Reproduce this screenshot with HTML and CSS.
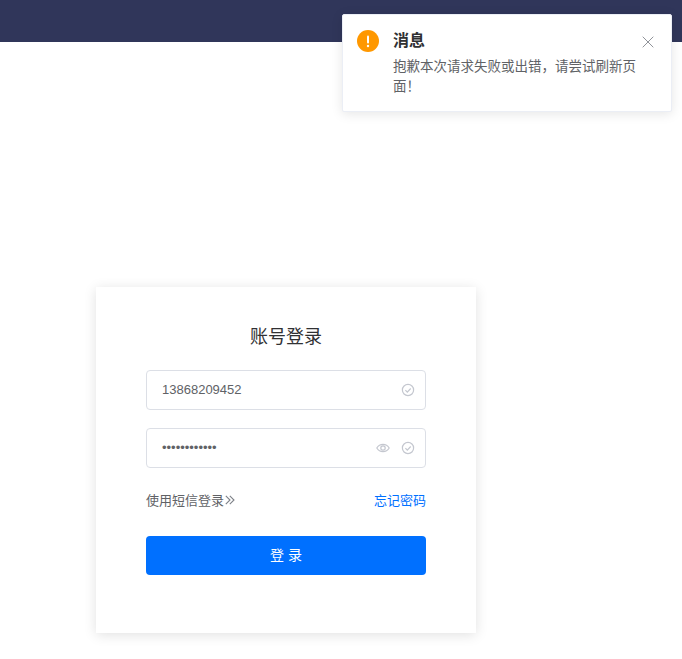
FILE: index.html
```html
<!DOCTYPE html>
<html lang="zh-CN">
<head>
<meta charset="utf-8">
<title>账号登录</title>
<link rel="stylesheet" href="styles.css">
</head>
<body>
<header class="topbar"></header>
<main class="page">
  <form class="card">
    <h1 class="title">账号登录</h1>
    <div class="field">
      <span class="value">13868209452</span>
      <span class="icons">
        <svg class="icon" viewBox="0 0 14 14"><circle cx="7" cy="7" r="5.6"/><path d="M4.4 7.2l1.9 1.9 3.4-3.6"/></svg>
      </span>
    </div>
    <div class="field">
      <span class="value">••••••••••••</span>
      <span class="icons">
        <svg class="icon eye" viewBox="0 0 14 14"><path d="M.8 7C2.3 4.6 4.5 3.4 7 3.4s4.7 1.2 6.2 3.6C11.7 9.4 9.5 10.6 7 10.6S2.3 9.4.8 7z"/><circle cx="7" cy="7" r="2.2"/></svg>
        <svg class="icon" viewBox="0 0 14 14"><circle cx="7" cy="7" r="5.6"/><path d="M4.4 7.2l1.9 1.9 3.4-3.6"/></svg>
      </span>
    </div>
    <div class="links">
      <a class="sms">使用短信登录<svg class="chev" viewBox="0 0 10 10"><path d="M.8.8L5 5 .8 9.2M4.8.8L9 5 4.8 9.2"/></svg></a>
      <a class="forgot">忘记密码</a>
    </div>
    <button class="submit" type="button">登 录</button>
  </form>
</main>
<aside class="notice">
  <svg class="notice-icon" viewBox="0 0 22 22"><circle cx="11" cy="11" r="11"/><rect x="10" y="5.5" width="2" height="8" rx="1"/><circle cx="11" cy="16" r="1.2"/></svg>
  <div class="notice-body">
    <h2 class="notice-title">消息</h2>
    <p class="notice-text">抱歉本次请求失败或出错，请尝试刷新页面！</p>
  </div>
  <svg class="notice-close" viewBox="0 0 12 12"><path d="M.7.7l10.6 10.6M11.3.7L.7 11.3"/></svg>
</aside>
</body>
</html>
```
FILE: styles.css
```css
* { box-sizing: border-box; }
html, body { margin: 0; padding: 0; background: #fff; }
body {
  height: 659px;
  overflow: hidden;
  font-family: "Liberation Sans", "Noto Sans CJK SC", sans-serif;
  color: #606266;
}
.topbar { height: 42px; background: #30365a; }
.page { padding: 245px 0 0 96px; }
.card {
  width: 380px;
  height: 346px;
  padding: 0 50px;
  background: #fff;
  box-shadow: 0 2px 12px rgba(0, 0, 0, 0.12);
}
.title {
  margin: 0;
  padding-top: 38px;
  height: 83px;
  font-size: 18px;
  line-height: 25px;
  font-weight: 400;
  text-align: center;
  color: #303133;
}
.field {
  height: 40px;
  margin-bottom: 18px;
  padding: 0 10px 0 15px;
  display: flex;
  align-items: center;
  justify-content: space-between;
  border: 1px solid #dcdfe6;
  border-radius: 4px;
  font-size: 13px;
  line-height: 18px;
}
.icons { display: flex; align-items: center; gap: 11px; margin-bottom: 1px; }
.icon { width: 14px; height: 14px; fill: none; stroke: #c4c7cf; stroke-width: 1.2; }
.links {
  display: flex;
  justify-content: space-between;
  align-items: center;
  margin-top: 21px;
  height: 20px;
  font-size: 13px;
}
.sms { display: flex; align-items: center; color: #606266; }
.chev { width: 10px; height: 10px; margin: 2px 0 0 1px; fill: none; stroke: #7d8087; stroke-width: 1.1; }
.forgot { color: #0070ff; }
.submit {
  display: block;
  width: 100%;
  height: 39px;
  margin-top: 27px;
  padding: 0 0 4px;
  border: 0;
  border-radius: 4px;
  background: #0070ff;
  color: #fff;
  font: inherit;
  font-size: 14px;
}
.notice {
  position: absolute;
  left: 342px;
  top: 14px;
  width: 330px;
  height: 98px;
  padding: 14px 16px 14px 14px;
  display: flex;
  background: #fff;
  border: 1px solid #ebeef5;
  border-radius: 2px;
  box-shadow: 0 2px 12px rgba(0, 0, 0, 0.1);
}
.notice-icon { flex: none; width: 22px; height: 22px; margin-top: 1px; }
.notice-icon circle:first-child { fill: #ff9800; }
.notice-icon rect, .notice-icon circle:last-child { fill: #fff; }
.notice-body { margin-left: 14px; width: 250px; }
.notice-title { margin: 0; font-size: 16px; line-height: 24px; font-weight: 700; color: #303133; }
.notice-text { margin: 4px 0 0; font-size: 13.5px; line-height: 20px; color: #606266; }
.notice-close { position: absolute; right: 17px; top: 21px; width: 12px; height: 12px; fill: none; stroke: #909399; stroke-width: 1; }
```
